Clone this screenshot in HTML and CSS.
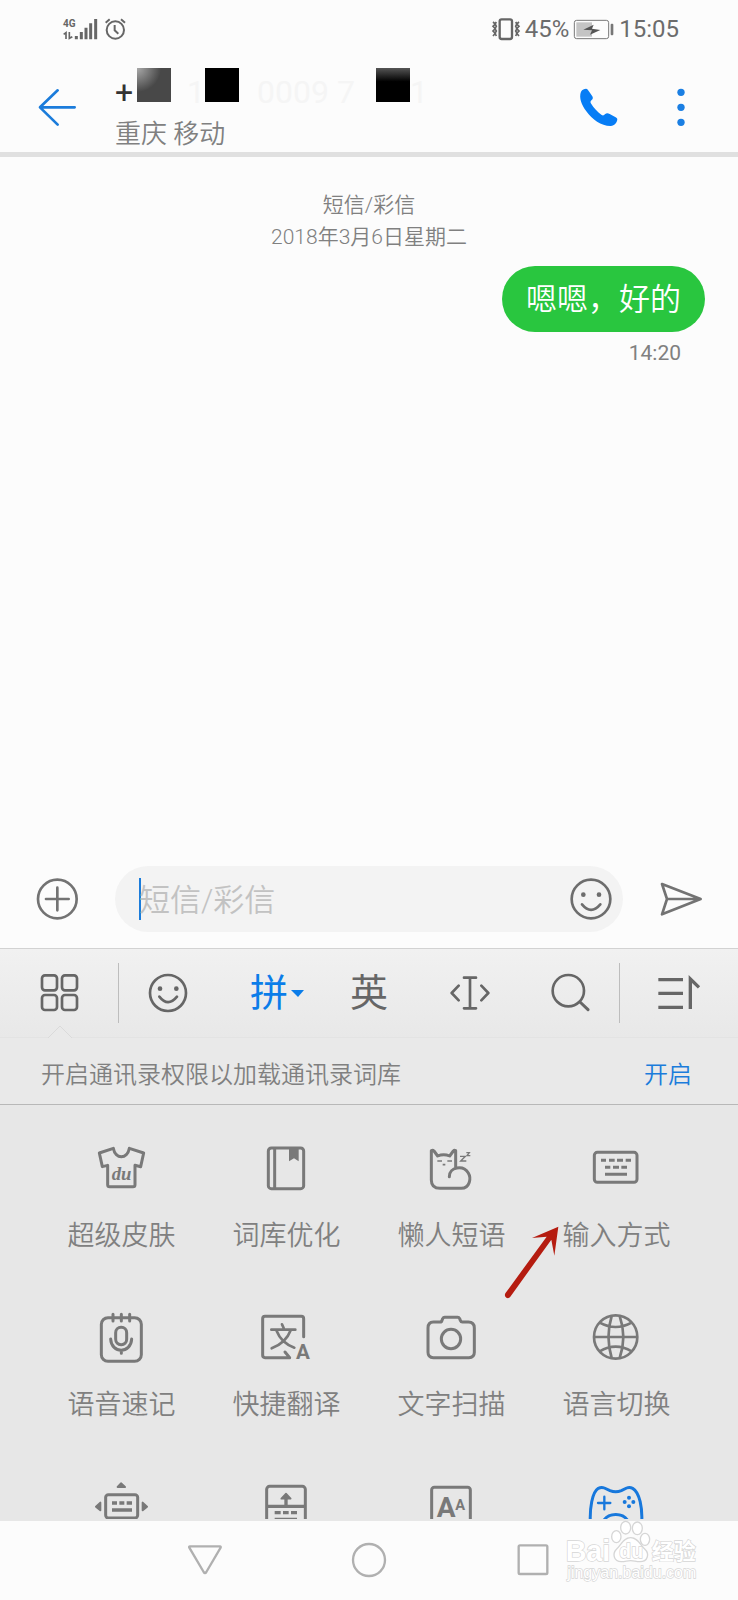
FILE: index.html
```html
<!DOCTYPE html>
<html lang="zh-CN">
<head>
<meta charset="utf-8">
<meta name="viewport" content="width=device-width, initial-scale=1">
<title>短信/彩信</title>
<link rel="stylesheet" href="styles.css">
</head>
<body>
<div class="screen">
  <div class="status">
    <svg class="status-left" viewBox="186 50 195 72" aria-label="4G">
      <text class="net" x="189" y="81">4G</text>
      <g fill="none" stroke="#666" stroke-width="5">
        <path d="M191 102l7-5v19M208 95v19l9-5"/>
        <path stroke-width="9" d="M229 107v10M244 95v22M258 82v35M272 69v48M287 56v61"/>
        <circle cx="346" cy="89" r="26" stroke-width="6"/>
        <path d="M344 74v16l11 10M317 67l12-10M375 67l-12-10" stroke-width="6"/>
      </g>
    </svg>
    <div class="status-right">
      <svg class="vibrate" viewBox="373 50 90 72" aria-hidden="true">
        <g fill="none" stroke="#666">
          <rect x="399" y="57" width="37" height="59" rx="6" stroke-width="7"/>
          <path stroke-width="5" d="M379 65l7 6-7 7 7 7-7 7 7 7-7 8M389 65l-4 6 4 7-4 7 4 7-4 7 4 8M457 65l-7 6 7 7-7 7 7 7-7 7 7 8M447 65l4 6-4 7 4 7-4 7 4 7-4 8"/>
        </g>
      </svg>
      <span>45%</span>
      <svg class="battery" viewBox="615 50 126 72" aria-hidden="true">
        <rect x="619" y="60" width="103" height="55" rx="7" fill="none" stroke="#777" stroke-width="3"/>
        <rect x="625" y="66" width="47" height="43" fill="#c4c4c4"/>
        <path d="M646 88l31-15-5 12 25 4-31 14 6-13z" fill="#555"/>
        <rect x="728" y="70" width="8" height="35" rx="3" fill="#777"/>
      </svg>
      <span>15:05</span>
    </div>
  </div>

  <header class="header">
    <button class="icon-btn side" aria-label="返回">
      <svg class="i44" viewBox="108 258 132 132"><path d="M224 322H121M173 271l-53 51 53 52" fill="none" stroke="#1b7cdb" stroke-width="8" stroke-linecap="round" stroke-linejoin="round"/></svg>
    </button>
    <div class="contact">
      <div class="number">
        <span class="plus">+</span>
        <span class="mask mask-grey"></span>
        <span class="ghost ghost-one">1</span>
        <span class="mask"></span>
        <span class="ghost ghost-mid">0009 7</span>
        <span class="mask mask-fade"></span>
        <span class="ghost">1</span>
      </div>
      <div class="region">重庆 移动</div>
    </div>
    <button class="icon-btn call" aria-label="拨号">
      <svg class="i44" viewBox="624 258 132 132"><path d="M636 275c4-7 10-9 15-9 4 0 6 4 8 7l10 14c4 6 3 9-1 13-5 4-4 8-1 12 7 12 19 24 30 32 4 3 7 3 11-1 4-5 9-4 14-1l18 10c5 3 6 6 4 11-3 9-10 14-18 15-28 1-56-19-74-44-14-19-23-41-16-59z" fill="#077df5"/></svg>
    </button>
    <button class="icon-btn side" aria-label="更多">
      <svg class="i44" viewBox="869 258 132 132"><g fill="#1b7fe3"><circle cx="935" cy="277" r="11"/><circle cx="935" cy="322" r="11"/><circle cx="935" cy="367" r="11"/></g></svg>
    </button>
  </header>

  <main class="chat">
    <p class="meta">短信/彩信<br>2018年3月6日星期二</p>
    <div class="bubble">嗯嗯，好的</div>
    <time class="time">14:20</time>
  </main>

  <form class="compose">
    <button type="button" class="icon-btn" aria-label="添加">
      <svg class="i44" viewBox="108 81 132 132"><g fill="none" stroke="#737373" stroke-width="8" stroke-linecap="round"><circle cx="172" cy="147" r="58"/><path d="M138 147h68M172 113v68"/></g></svg>
    </button>
    <div class="field">
      <span class="caret"></span>
      <input class="field-input" type="text" placeholder="短信/彩信" aria-label="短信/彩信">
      <button type="button" class="icon-btn" aria-label="表情">
        <svg class="i44" viewBox="598 81 132 132"><g fill="none" stroke="#6d6d6d" stroke-width="8" stroke-linecap="round"><circle cx="664" cy="147" r="58"/><path d="M637 163q27 33 55 0"/></g><g fill="#6d6d6d"><circle cx="641" cy="134" r="7"/><circle cx="688" cy="134" r="7"/></g></svg>
      </button>
    </div>
    <button type="button" class="icon-btn" aria-label="发送">
      <svg class="i44" viewBox="868 81 132 132"><path d="M877 102l116 45-116 46 15-46zM892 147h98" fill="none" stroke="#737373" stroke-width="8" stroke-linejoin="round"/></svg>
    </button>
  </form>

  <section class="keyboard">
    <div class="toolbar">
      <button class="tool tool-end" aria-label="功能">
        <svg class="i42" viewBox="114 366 126 126"><g fill="none" stroke="#666" stroke-width="8"><rect x="126" y="376" width="45" height="45" rx="9"/><rect x="186" y="376" width="45" height="45" rx="9"/><rect x="126" y="435" width="45" height="45" rx="9"/><rect x="186" y="435" width="45" height="45" rx="9"/></g></svg>
      </button>
      <span class="rule"></span>
      <button class="tool" aria-label="表情">
        <svg class="i42" viewBox="445 367 126 126"><g fill="none" stroke="#666" stroke-width="8" stroke-linecap="round"><circle cx="505" cy="430" r="54"/><path d="M479 441q26 33 53 0"/></g><g fill="#666"><circle cx="481" cy="417" r="7"/><circle cx="530" cy="417" r="7"/></g></svg>
      </button>
      <button class="tool tool-on">拼<svg class="drop" viewBox="0 0 14 8" aria-hidden="true"><path d="M0 1h13L7 8z" fill="#0b7de9"/></svg></button>
      <button class="tool">英</button>
      <button class="tool" aria-label="光标">
        <svg class="i42" viewBox="237 367 126 126"><path d="M285 384h36M303 384v92M285 476h36M269 408l-21 22 21 22M337 408l21 22-21 22" fill="none" stroke="#666" stroke-width="8" stroke-linecap="round" stroke-linejoin="round"/></svg>
      </button>
      <button class="tool" aria-label="搜索">
        <svg class="i42" viewBox="538 367 126 126"><g fill="none" stroke="#666" stroke-width="8" stroke-linecap="round"><circle cx="599" cy="423" r="47"/><path d="M634 457l24 23" stroke-width="9"/></g></svg>
      </button>
      <span class="rule"></span>
      <button class="tool tool-end" aria-label="收起">
        <svg class="i46" viewBox="860 361 138 138"><path d="M867 390h74M867 431h74M867 473h74M963 478v-90l26 25" fill="none" stroke="#666" stroke-width="10"/></svg>
      </button>
    </div>

    <div class="notice">
      <svg class="notch" viewBox="0 0 26 14" aria-hidden="true"><path d="M1 13L13 1l12 12" fill="#e9e9e9" stroke="#dadada"/></svg>
      <span>开启通讯录权限以加载通讯录词库</span>
      <button class="enable">开启</button>
    </div>

    <div class="panel">
      <button class="item">
        <svg class="glyph" viewBox="129 60 171 168"><path d="M148 99l42-14c6 34 42 34 48 0l43 14-9 41-17-4v58q0 6-6 6h-70q-6 0-6-6v-58l-16 4z" fill="none" stroke="#797979" stroke-width="9" stroke-linejoin="round"/><text class="du" x="185" y="180">du</text></svg>
        <span>超级皮肤</span>
      </button>
      <button class="item">
        <svg class="glyph" viewBox="624 60 171 168"><rect x="655" y="84" width="106" height="122" rx="9" fill="none" stroke="#797979" stroke-width="9"/><path d="M674 84v122" stroke="#797979" stroke-width="9"/><path d="M717 86h29v38l-14-9-15 9z" fill="#797979"/></svg>
        <span>词库优化</span>
      </button>
      <button class="item">
        <svg class="glyph" viewBox="129 60 171 168"><g fill="none" stroke="#797979" stroke-width="9" stroke-linejoin="round" stroke-linecap="round"><path d="M227 144V92q-4-2-7 1l-11 15q-18-8-36 0l-11-15q-4-4-8-1v88q0 25 26 25h64c26 0 30-31 21-46-16-25-57-18-57 11"/></g><g fill="none" stroke="#797979" stroke-width="5"><path d="M172 123h14M202 123h14M188 134h8"/><path d="M240 109h16l-14 14h17M259 98h9l-7 9h10" stroke-width="4"/></g></svg>
        <span>懒人短语</span>
      </button>
      <button class="item">
        <svg class="glyph" viewBox="624 60 171 168"><rect x="643" y="97" width="128" height="90" rx="9" fill="none" stroke="#797979" stroke-width="9"/><path d="M663 121h15M687 121h17M711 121h18M737 121h16M675 142h16M699 142h18M724 142h17M675 163h66" stroke="#797979" stroke-width="9"/></svg>
        <span>输入方式</span>
      </button>
      <button class="item">
        <svg class="glyph" viewBox="129 57 171 168"><g fill="none" stroke="#797979" stroke-width="9" stroke-linecap="round"><rect x="154" y="83" width="120" height="131" rx="20"/><path d="M189 73v20M214 73v20M239 73v20" /><rect x="197" y="112" width="33" height="52" rx="16"/><path d="M182 147c2 45 61 45 63 0M214 182v8"/></g></svg>
        <span>语音速记</span>
      </button>
      <button class="item">
        <svg class="glyph" viewBox="624 57 171 168"><g fill="none" stroke="#797979" stroke-width="9" stroke-linecap="round" stroke-linejoin="round"><path d="M761 140V86q0-7-7-7H645q-7 0-7 7v110q0 7 7 7h74l-14-17"/><path stroke-width="8" d="M696 103l5 11M664 119h72M722 121q-14 38-57 54M680 123q14 36 53 50"/></g><text class="mini" x="738" y="207">A</text></svg>
        <span>快捷翻译</span>
      </button>
      <button class="item">
        <svg class="glyph" viewBox="129 57 171 168"><g fill="none" stroke="#797979" stroke-width="9" stroke-linejoin="round"><path d="M160 96h20q5 0 6-5l2-5q2-4 6-4h39q4 0 6 4l2 5q2 5 6 5h18q18 0 18 18v73q0 16-16 16H160q-16 0-16-16v-73q0-18 16-18z"/><circle cx="213" cy="147" r="29"/></g></svg>
        <span>文字扫描</span>
      </button>
      <button class="item">
        <svg class="glyph" viewBox="624 57 171 168"><g fill="none" stroke="#797979" stroke-width="8"><circle cx="707" cy="141" r="65"/><path d="M642 141h130M695 78q-19 63 0 126M719 78q22 63 0 126M659 98q48 26 96 0M659 184q48-28 96 0"/></g></svg>
        <span>语言切换</span>
      </button>
      <button class="item" aria-label="键盘调节">
        <svg class="glyph" viewBox="129 54 171 168"><rect x="167" y="104" width="96" height="70" rx="8" fill="none" stroke="#797979" stroke-width="9"/><path d="M186 129h15M208 129h15M230 129h16M186 150h60" stroke="#797979" stroke-width="10"/><path d="M203 81l10-11 12 11zM151 128v23l-13-11zM278 128v23l13-11z" fill="#797979" stroke="#797979" stroke-width="6" stroke-linejoin="round"/></svg>
      </button>
      <button class="item" aria-label="上屏">
        <svg class="glyph" viewBox="624 54 171 168"><rect x="650" y="79" width="116" height="125" rx="9" fill="none" stroke="#797979" stroke-width="9"/><path d="M650 139h116M708 108v30M674 158h18M699 158h17M723 158h18M674 178h67" stroke="#797979" stroke-width="10"/><path d="M694 116l14-15 14 15z" fill="#797979" stroke="#797979" stroke-width="5" stroke-linejoin="round"/></svg>
      </button>
      <button class="item" aria-label="字体大小">
        <svg class="glyph" viewBox="159 54 171 168"><rect x="185" y="82" width="116" height="122" rx="8" fill="none" stroke="#797979" stroke-width="9"/><text class="big" x="200" y="172">A</text><text class="mid" x="256" y="150">A</text></svg>
      </button>
      <button class="item" aria-label="游戏键盘">
        <svg class="glyph" viewBox="654 54 171 168"><g fill="none" stroke="#1878dc" stroke-width="9" stroke-linecap="round"><path d="M661 190c-2-45 5-93 24-105q9-5 18-1l17 8q17 7 34 0l16-8q9-4 18 1c21 12 30 60 27 105M702 180c15-22 56-22 70 0" /><path stroke-width="7" d="M684 129h37M703 110v38"/></g><g fill="#1878dc"><circle cx="777" cy="113" r="6"/><circle cx="777" cy="139" r="6"/><circle cx="764" cy="126" r="6"/><circle cx="790" cy="126" r="6"/></g></svg>
      </button>
      <svg class="pointer" viewBox="360 306 195 240" aria-hidden="true"><path d="M535 320l-79 34 44-4L376 520q-4 8 3 13 7 4 12-3L514 359l9 48z" fill="#b51c10"/></svg>
    </div>
  </section>

  <nav class="nav">
    <button class="icon-btn nav-btn" aria-label="后退"><svg class="i40" viewBox="405 240 120 120"><path d="M420 259h90q3 0 2 4l-43 73q-4 6-8 0l-43-73q-2-4 2-4z" fill="none" stroke="#b0b0b0" stroke-width="7"/></svg></button>
    <button class="icon-btn nav-btn" aria-label="主页"><svg class="i40" viewBox="0 0 120 120"><circle cx="60" cy="60" r="48" fill="none" stroke="#b0b0b0" stroke-width="7"/></svg></button>
    <button class="icon-btn nav-btn" aria-label="最近任务"><svg class="i40" viewBox="430 240 120 120"><rect x="447" y="256" width="86" height="86" rx="4" fill="none" stroke="#b0b0b0" stroke-width="7"/></svg></button>
    <svg class="brand" viewBox="582 170 417 201">
      <g fill="#fff" stroke="#d6d6d6" stroke-width="4">
        <ellipse cx="767" cy="202" rx="15" ry="19"/><ellipse cx="802" cy="204" rx="15" ry="19"/><ellipse cx="739" cy="229" rx="14" ry="18"/><ellipse cx="825" cy="237" rx="14" ry="18"/>
        <path d="M782 232c22 0 28 22 42 34 16 15 9 38-14 38-12 0-18-3-28-3s-16 3-28 3c-23 0-28-24-14-38 13-12 20-34 42-34z"/>
        <g class="brand-text">
          <text class="b-bai" x="587" y="303">Bai</text>
          <text class="b-du" x="748" y="293">du</text>
          <text class="b-cn" x="845" y="296">经验</text>
          <text class="b-url" x="592" y="353">jingyan.baidu.com</text>
        </g>
      </g>
    </svg>
  </nav>
</div>
</body>
</html>
```
FILE: styles.css
```css
* { box-sizing: border-box; }

body {
  margin: 0;
  background: #fcfcfc;
  color: #808080;
  font-family: Roboto, "Noto Sans CJK SC", sans-serif;
  font-weight: 350;
}

button {
  padding: 0;
  border: 0;
  background: none;
  color: inherit;
  font: inherit;
}

svg { display: block; flex: none; }

.screen {
  display: flex;
  flex-direction: column;
  min-height: 100vh;
}

.i40 { width: 40px; height: 40px; }
.i42 { width: 42px; height: 42px; }
.i44 { width: 44px; height: 44px; }
.i46 { width: 46px; height: 46px; }

.icon-btn {
  display: flex;
  align-items: center;
  justify-content: center;
}

/* status bar */
.status {
  display: flex;
  align-items: center;
  justify-content: space-between;
  height: 58px;
  padding: 0 59px 0 62px;
  color: #6c6c6c;
  font-size: 24px;
  font-weight: 400;
}
.status-left { width: 65px; height: 24px; }
.status-right { display: flex; align-items: center; gap: 4px; }
.vibrate { width: 30px; height: 24px; }
.battery { width: 42px; height: 24px; }
.net { font-size: 30px; font-weight: 700; fill: #666; }

/* contact header */
.header {
  display: flex;
  padding-top: 6px;
  border-bottom: 5px solid #e0e0e0;
}
.side { width: 115px; }
.call { width: 48px; }
.contact { flex: 1; padding-top: 4px; }
.number {
  display: flex;
  height: 48px;
  font-size: 32px;
  line-height: 48px;
  font-weight: 400;
}
.plus { width: 22px; color: #333; }
.mask { width: 34px; height: 34px; background: #000; }
.mask-grey { background: radial-gradient(circle at 0 0, #aaa, #484848 50%); }
.mask-fade { background: linear-gradient(#555, #000 40%); }
.ghost { color: #f5f5f5; }
.ghost-one { width: 34px; padding-left: 16px; }
.ghost-mid { width: 137px; padding-left: 18px; }
.region { font-size: 26px; line-height: 36px; }

/* conversation */
.chat {
  display: flex;
  flex: 1;
  flex-direction: column;
  align-items: flex-end;
  padding: 32px 33px 0;
}
.meta {
  align-self: center;
  margin: 0 0 13px;
  font-size: 21px;
  line-height: 32px;
  text-align: center;
}
.bubble {
  padding: 2px 24px 0;
  border-radius: 33px;
  background: #29c63f;
  color: #fff;
  font-size: 31px;
  line-height: 64px;
}
.time {
  margin: 5px 24px 0 0;
  font-size: 21px;
  font-weight: 400;
  line-height: 32px;
}

/* compose row */
.compose {
  display: grid;
  grid-template-columns: 115px 1fr 115px;
  padding: 16px 0;
}
.field {
  display: flex;
  align-items: center;
  height: 66px;
  padding: 0 10px 0 24px;
  border-radius: 33px;
  background: #f3f3f3;
}
.caret { width: 2px; height: 42px; margin-right: -2px; background: #1b7cdb; }
.field-input {
  flex: 1;
  min-width: 0;
  height: 48px;
  padding: 2px 0 0;
  border: 0;
  outline: 0;
  background: none;
  color: #666;
  font: inherit;
  font-size: 31px;
}
.field-input::placeholder { color: #c2c2c2; }

/* keyboard */
.keyboard { border-top: 1px solid #d2d2d2; background: #e7e7e7; }
.toolbar {
  display: flex;
  align-items: center;
  height: 88px;
  background: linear-gradient(#f1f1f1, #e8e8e8);
}
.tool {
  position: relative;
  display: flex;
  flex: 1;
  align-items: center;
  justify-content: center;
  color: #666;
  font-size: 38px;
  font-weight: 400;
  line-height: 56px;
}
.tool-end { flex: none; width: 118px; }
.tool-on { color: #0b7de9; }
.drop {
  position: absolute;
  top: 50%;
  left: calc(50% + 22px);
  width: 14px;
  height: 8px;
  margin-top: -4px;
}
.rule { width: 1px; height: 60px; background: #bdbdbd; }

.notice {
  position: relative;
  display: flex;
  align-items: center;
  justify-content: space-between;
  height: 68px;
  padding: 2px 46px 0 41px;
  border-top: 1px solid #e3e3e3;
  border-bottom: 1px solid #b8b8b8;
  background: #e9e9e9;
  font-size: 24px;
}
.notch {
  position: absolute;
  top: -13px;
  left: 47px;
  width: 26px;
  height: 14px;
}
.enable { color: #1b7cdb; }

.panel {
  position: relative;
  display: grid;
  grid-template-columns: repeat(4, 1fr);
  row-gap: 53px;
  height: 416px;
  padding: 35px 39px 0;
  border-bottom: 2px solid #e7e7e7;
  overflow: hidden;
}
.item {
  display: flex;
  flex-direction: column;
  align-items: center;
  gap: 20px;
  height: 116px;
  font-size: 27px;
  line-height: 40px;
}
.glyph { width: 57px; height: 56px; }
.glyph text { fill: #797979; font-weight: 700; }
.du { font-family: "Liberation Serif", serif; font-size: 56px; font-style: italic; }
.mini { font-size: 62px; }
.big { font-size: 84px; }
.mid { font-size: 44px; }
.pointer {
  position: absolute;
  top: 117px;
  right: 173px;
  width: 65px;
  height: 80px;
}

/* system navigation */
.nav {
  position: relative;
  display: flex;
  justify-content: center;
  height: 79px;
  padding-bottom: 2px;
}
.nav-btn { width: 164px; }
.brand {
  position: absolute;
  right: 35px;
  bottom: 16px;
  width: 139px;
  height: 67px;
}
.brand-text { paint-order: stroke; font-family: "Liberation Sans", "Noto Sans CJK SC", sans-serif; font-weight: 700; }
.b-bai { font-size: 86px; }
.b-du { font-size: 58px; }
.b-cn { font-size: 66px; }
.b-url { font-size: 48px; font-weight: 400; }
```
